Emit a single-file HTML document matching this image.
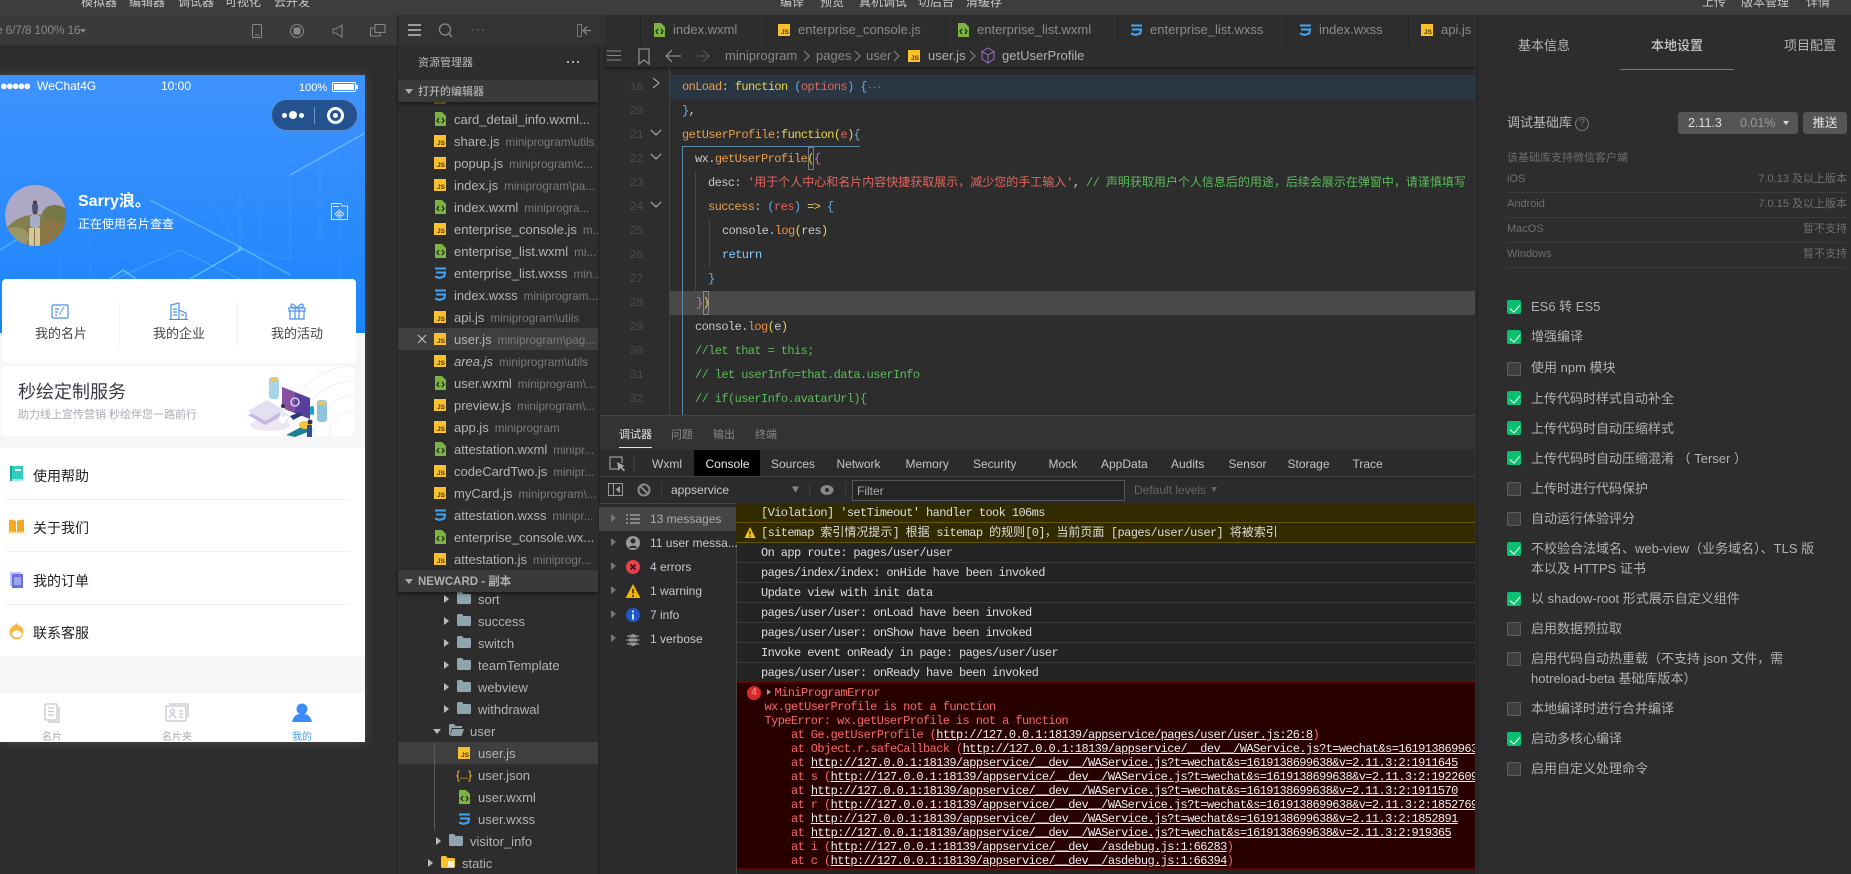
<!DOCTYPE html>
<html lang="zh"><head><meta charset="utf-8"><title>WeChat DevTools</title>
<style>
*{box-sizing:border-box}
html,body{margin:0;padding:0;width:1851px;height:874px;overflow:hidden;background:#2d2d2d}
body{position:relative;font-family:"Liberation Sans","Noto Sans CJK SC",sans-serif;font-size:13px;color:#aaa}
.a,.t{position:absolute;white-space:nowrap}
.a svg,svg.a{display:block}
.top span{position:absolute;top:-7px;line-height:18px;font-size:12px;color:#c8c8c8;white-space:nowrap}
/* sidebar */
.r{position:absolute;left:398px;width:200px;height:22px;line-height:22px;overflow:hidden;white-space:nowrap;color:#b4b4b4;font-size:13px}
.r b{position:absolute;left:56px;font-weight:400;top:1px}
.r b i{font-style:normal;font-size:11.7px;color:#7c7c7c;margin-left:6px}
.r .ic{position:absolute;left:36px;top:5px}
.j{display:block;width:12px;height:12px;background:#fbc02d;color:#4a3700;font:bold 6.5px/6px "Liberation Sans",sans-serif;text-align:right;padding:6px 1px 0 0}
.hi{background:#3f3f3f}
.sec{position:absolute;left:398px;width:200px;height:22px;line-height:22px;padding-top:1px;background:#3a3a3a;color:#b0b0b0;font-size:11px;font-weight:500;padding-left:20px;box-shadow:0 2px 3px rgba(0,0,0,.45);z-index:2}
.sec:before{content:"";position:absolute;left:7px;top:9px;border:4px solid transparent;border-top:5px solid #aaa;border-bottom:0}
.ar{position:absolute;top:7px;border:4px solid transparent;border-left:5px solid #b5bdc2;border-right:0}
.ard{position:absolute;top:9px;border:4px solid transparent;border-top:5px solid #b5bdc2;border-bottom:0}
.fo{position:absolute;top:4px}
/* tabs */
.tb{position:absolute;top:15px;height:30px;line-height:30px;border-left:1px solid #222;color:#8c8c8c;font-size:13px;white-space:nowrap}
.tb b{position:absolute;font-weight:400;top:0}
.tb .ic{position:absolute;top:9px}
/* code */
.n{position:absolute;left:620px;width:23px;text-align:right;font:12px/24px "Liberation Mono",monospace;color:#4c4c4c;letter-spacing:-.6px}
.c{position:absolute;font:12px/25px "Liberation Mono","Noto Sans CJK SC",monospace;letter-spacing:-.6px;white-space:nowrap;color:#c9c9c9}
.c .z{letter-spacing:0}
.og{color:#e8a14f}.ye{color:#e9d54f}.re{color:#e0675f}.bl{color:#5fb0ef}.pk{color:#c86fc8}.gr{color:#5cbb5c}.lg{color:#f08d3c}.kw{color:#86ccff}
/* console */
.dt{position:absolute;top:451px;line-height:26px;font-size:12px;color:#c4c4c4}
.l{position:absolute;left:736px;width:760px;height:20px;padding-left:25px;border-bottom:1px solid #3a3a3a;font:12px/21px "Liberation Mono","Noto Sans CJK SC",monospace;letter-spacing:-.6px;color:#dcdcdc;white-space:nowrap}
.l .z{letter-spacing:0}
.s{position:absolute;left:600px;width:136px;height:24px;line-height:24px;font-size:12px;color:#c8c8c8;white-space:nowrap}
.s b{position:absolute;left:50px;font-weight:400}
.s .ar{left:11px;top:7px;border-left-color:#777}
.s svg{position:absolute;left:25px;top:4px}
.e{position:absolute;font:12px/15px "Liberation Mono",monospace;letter-spacing:-.6px;color:#f46a6a;white-space:nowrap}
.e u{color:#eee}
/* right */
.cb{position:absolute;left:1507px;width:14px;height:14px;border-radius:2px;background:#3f3f3f;border:1px solid #5f5f5f}
.cb.on{background:#07c16f;border:0}
.cb.on:after{content:"";position:absolute;left:5px;top:2px;width:5px;height:9px;border:solid #fff;border-width:0 1.6px 1.6px 0;transform:rotate(40deg)}
.lb{position:absolute;left:1531px;font-size:13px;line-height:20px;color:#b2b2b2;white-space:nowrap}
.inf{position:absolute;left:1507px;width:340px;height:25px;line-height:23px;font-size:11px;color:#707070;border-bottom:1px solid #3c3c3c}
.inf span{position:absolute;right:0}
/* phone */
.mn{position:absolute;left:33px;font-size:14px;line-height:20px;color:#222}
</style></head><body>
<svg width="0" height="0" style="position:absolute"><defs>
<symbol id="x" viewBox="0 0 12 14"><path d="M1 0H8L12 4V14H1Z" fill="#7cb342"/><path d="M5 6L3 8.500L5 11M8 6L10 8.500L8 11" stroke="#1e3010" fill="none" stroke-width="1.300"/></symbol>
<symbol id="w" viewBox="0 0 14 12"><path d="M2 1.500H13M3 5.500H12L11.200 9.500L6.500 11L2 9.500" stroke="#42a5f5" fill="none" stroke-width="2"/></symbol>
<symbol id="f" viewBox="0 0 14 12"><path d="M0 1.500Q0 0 1.500 0H5L6.500 2H12.500Q14 2 14 3.500V10.500Q14 12 12.500 12H1.500Q0 12 0 10.500Z" fill="#90a4ae"/></symbol>
</defs></svg>

<!-- top bar -->
<div class="a top" style="left:0;top:0;width:1851px;height:15px;background:#3d3d3d;overflow:hidden">
<span style="left:81px">模拟器</span><span style="left:129px">编辑器</span><span style="left:178px">调试器</span><span style="left:225px">可视化</span><span style="left:274px">云开发</span>
<span style="left:780px">编译</span><span style="left:820px">预览</span><span style="left:859px">真机调试</span><span style="left:918px">切后台</span><span style="left:966px">清缓存</span>
<span style="left:1702px">上传</span><span style="left:1741px">版本管理</span><span style="left:1806px">详情</span>
</div>

<!-- simulator -->
<div class="a" style="left:0;top:15px;width:398px;height:30px;background:#3a3a3a"></div>
<div class="t" style="left:-4px;top:20px;line-height:20px;font-size:12px;letter-spacing:-.2px;color:#8a8a8a">e 6/7/8 100% 16</div>
<div class="a" style="left:80px;top:29px;border:3.500px solid transparent;border-top:4px solid #888;border-bottom:0"></div>
<svg class="a" style="left:250px;top:22px" width="140" height="18" fill="none" stroke="#888" stroke-width="1"><rect x="2.500" y="2.500" width="9" height="13" rx="1"/><path d="M5 13H9"/><circle cx="47" cy="9" r="6.500"/><rect x="44" y="6" width="6" height="6" fill="#888" rx="1"/><path d="M83 7H86L92 3V15L86 11H83Z"/><rect x="125" y="2.500" width="10" height="8"/><path d="M125 6H120.500V14H130V10.500"/></svg>
<div class="a" style="left:0;top:75px;width:365px;height:667px;box-shadow:0 0 10px rgba(255,255,255,.16)"></div>

<div class="a" style="left:0;top:0;width:365px;height:742px;clip-path:inset(75px 0 0 0);background:#f5f6f8">
<div class="a" style="left:0;top:75px;width:365px;height:258px;background:linear-gradient(#3f93ff,#2f8cfd 45%,#1a85fb)"></div>
<svg class="a" style="left:0;top:75px" width="365" height="258" fill="none" stroke="#8fe0ff">
<path d="M290 100L365 58" stroke-opacity=".5" stroke-width="1.500"/><path d="M290 100V185M290 185L240 175M320 80V170M240 120V175L215 130" stroke-opacity=".14"/>
<path d="M150 125L240 172L290 200" stroke-opacity=".45" stroke-width="1.500"/><path d="M190 204L240 175" stroke-opacity=".55" stroke-width="1.500"/><path d="M115 204L180 175L240 204" stroke-opacity=".3"/><path d="M0 175L40 150" stroke-opacity=".4" stroke-width="1.500"/><path d="M90 120V204M60 130V204M260 130V204M340 130V204" stroke-opacity=".08"/><path d="M110 204L123 195L136 204" stroke-opacity=".6" stroke-width="1.500"/>
<circle cx="240" cy="174" r="2" fill="#9ff" stroke="none" opacity=".35"/>
</svg>
<!-- status bar -->
<div class="t" style="left:0;top:79px;line-height:14px;font-size:13px;letter-spacing:-2px;color:#fff">●●●●●</div>
<div class="t" style="left:37px;top:76px;line-height:20px;font-size:12px;color:#fff">WeChat4G</div>
<div class="t" style="left:161px;top:76px;line-height:20px;font-size:12px;color:#fff">10:00</div>
<div class="t" style="left:299px;top:78px;line-height:20px;font-size:11px;color:#fff">100%</div>
<div class="a" style="left:332px;top:82px;width:24px;height:10px;border:1px solid #fff;border-radius:2px;padding:1px"><div style="width:100%;height:100%;background:#fff"></div></div>
<div class="a" style="left:356px;top:85px;width:1.500px;height:4px;background:#fff"></div>
<!-- capsule -->
<div class="a" style="left:271px;top:99px;width:87px;height:32px;border-radius:16px;background:#23528f;border:1px solid #5d8cc4"></div>
<div class="a" style="left:282px;top:113px;width:5px;height:5px;border-radius:50%;background:#fff"></div>
<div class="a" style="left:289px;top:111px;width:8px;height:8px;border-radius:50%;background:#fff"></div>
<div class="a" style="left:299px;top:113px;width:5px;height:5px;border-radius:50%;background:#fff"></div>
<div class="a" style="left:314px;top:107px;width:1px;height:17px;background:#6f94c2"></div>
<div class="a" style="left:327px;top:107px;width:17px;height:17px;border-radius:50%;border:3px solid #fff"></div>
<div class="a" style="left:333px;top:113px;width:5px;height:5px;border-radius:50%;background:#fff"></div>
<!-- avatar -->
<svg class="a" style="left:5px;top:185px" width="61" height="61"><defs><clipPath id="av"><circle cx="30.500" cy="30.500" r="30.500"/></clipPath></defs><g clip-path="url(#av)"><rect width="61" height="61" fill="#aba9c6"/><path d="M0 45Q12 30 28 30T61 24V61H0Z" fill="#857f4e"/><ellipse cx="50" cy="30" rx="13" ry="10" fill="#76784a"/><ellipse cx="42" cy="48" rx="22" ry="14" fill="#8a7546"/><ellipse cx="10" cy="52" rx="14" ry="10" fill="#9a9668"/><rect x="25" y="30" width="10" height="13" rx="3" fill="#a4aec8"/><rect x="24" y="43" width="5" height="18" fill="#d4c69c"/><rect x="30" y="43" width="5" height="18" fill="#d4c69c"/><circle cx="30" cy="27" r="2.500" fill="#5a4636"/><rect x="27" y="19" width="6" height="7" rx="1.500" fill="#4a5578"/><circle cx="30" cy="17.500" r="2" fill="#4a3a30"/></g></svg>
<div class="t" style="left:78px;top:191px;line-height:22px;font-size:16px;font-weight:700;color:#fff">Sarry浪。</div>
<div class="t" style="left:78px;top:214px;line-height:20px;font-size:12px;color:#fff">正在使用名片查查</div>
<svg class="a" style="left:330px;top:202px" width="19" height="19" fill="none" stroke="#cfe4ff"><path d="M1.500 1.500H11L12 4H17.500V17.500H1.500Z"/><path d="M3 4.500H9"/><path d="M9.500 8L14 12L9.500 16L5 12Z"/><circle cx="9.500" cy="12" r="1.500"/></svg>
<!-- card 1 -->
<div class="a" style="left:2px;top:279px;width:354px;height:84px;background:#fff;border-radius:4px"></div>
<div class="a" style="left:119px;top:302px;width:1px;height:45px;background:#f0f0f0"></div>
<div class="a" style="left:237px;top:302px;width:1px;height:45px;background:#f0f0f0"></div>
<svg class="a" style="left:50px;top:303px" width="20" height="17" fill="none" stroke="#4a8ff0" stroke-width="1.200"><rect x="2" y="2" width="16" height="13" rx="1"/><path d="M5 6H9M5 9H8M5 12H7"/><path d="M14 4L9 12" stroke="#7ab0f5"/></svg>
<svg class="a" style="left:169px;top:302px" width="20" height="18" fill="none" stroke="#4a8ff0" stroke-width="1.200"><path d="M2 17V3L10 1V17M10 8L17 11V17M0 17.500H19"/><path d="M4 7H8M4 10H8M4 13H8M12 13H15"/></svg>
<svg class="a" style="left:287px;top:302px" width="20" height="18" fill="none" stroke="#4a8ff0" stroke-width="1.200"><rect x="2" y="6" width="16" height="3"/><path d="M3 9V17H17V9M8 6V17M12 6V17M10 6Q5 0 4 3T10 6Q15 0 16 3T10 6"/></svg>
<div class="t" style="left:35px;top:324px;line-height:20px;font-size:13px;color:#444">我的名片</div>
<div class="t" style="left:153px;top:324px;line-height:20px;font-size:13px;color:#444">我的企业</div>
<div class="t" style="left:271px;top:324px;line-height:20px;font-size:13px;color:#444">我的活动</div>
<!-- card 2 -->
<div class="a" style="left:1px;top:366px;width:353px;height:70px;background:#fff;border-radius:4px;overflow:hidden">
<svg class="a" style="left:0;top:0" width="353" height="70" fill="none" stroke="#eef0f4"><circle cx="353" cy="70" r="25"/><circle cx="353" cy="70" r="40"/><circle cx="353" cy="70" r="55"/><circle cx="353" cy="70" r="70"/></svg>
</div>
<div class="t" style="left:18px;top:379px;line-height:26px;font-size:18px;color:#3a3a44">秒绘定制服务</div>
<div class="t" style="left:18px;top:405px;line-height:20px;font-size:11px;color:#aaabb3">助力线上宣传营销 秒绘伴您一路前行</div>
<svg class="a" style="left:245px;top:375px" width="85" height="62">
<ellipse cx="25" cy="50" rx="20" ry="6" fill="#eee8f5"/>
<path d="M3 40L22 31L39 40L20 50Z" fill="#c6b8e2"/><path d="M3 36L22 25L39 35L20 46Z" fill="#e5dff2"/>
<rect x="24" y="2" width="10" height="22" rx="3" fill="#a8d4e8"/><ellipse cx="29" cy="5" rx="4" ry="2" fill="#f3c84a"/>
<path d="M37 12L65 23V44L37 33Z" fill="#5a3e9c"/><path d="M37 12L50 17V37L37 33Z" fill="#8a4ea0"/><circle cx="50" cy="27" r="4" fill="none" stroke="#c6d4f2" stroke-width="1.500"/>
<path d="M37 36L45 42L38 50L32 46Z" fill="#fff" stroke="#dde"/><circle cx="38" cy="31" r="2" fill="#334"/><rect x="36" y="33" width="4" height="9" fill="#e6ecf6"/>
<path d="M45 41L55 37L58 40L48 45Z" fill="#2a3b78"/>
<path d="M41 60L60 50L68 55L50 62Z" fill="#1e7f9a"/><ellipse cx="60" cy="50" rx="6" ry="4" fill="#f5c33c"/>
<rect x="72" y="25" width="10" height="22" rx="3" fill="#8fc4dc"/><ellipse cx="77" cy="28" rx="4" ry="2" fill="#f3c84a"/>
<rect x="62" y="50" width="5" height="12" fill="#2f4f8f"/><circle cx="65" cy="47" r="2.500" fill="#334"/><rect x="65" y="31" width="4" height="9" rx="2" fill="#1fa0d8"/>
</svg>
<!-- menu -->
<div class="a" style="left:0;top:448px;width:365px;height:208px;background:#fff"></div>
<div class="a" style="left:5px;top:499px;width:345px;height:1px;background:#f0f0f0"></div>
<div class="a" style="left:5px;top:551px;width:345px;height:1px;background:#f0f0f0"></div>
<div class="a" style="left:5px;top:604px;width:345px;height:1px;background:#f0f0f0"></div>
<svg class="a" style="left:10px;top:466px" width="13" height="16"><rect width="13" height="15" fill="#2dcfc0"/><rect x="0" y="13" width="13" height="2" fill="#a8ece6"/><rect x="0" width="2" height="15" fill="#1aa79b"/><rect x="5" y="3" width="6" height="2" fill="#fff"/></svg>
<svg class="a" style="left:8px;top:519px" width="17" height="15"><path d="M8 2Q4 0 1 1V13Q5 12 8 14Z" fill="#f2a823"/><path d="M9 2Q13 0 16 1V13Q12 12 9 14Z" fill="#f2a823"/><path d="M0 13H17V14.500H0Z" fill="#f8d79c"/></svg>
<svg class="a" style="left:10px;top:572px" width="13" height="16"><rect width="11" height="14" fill="#b4c8fa"/><rect x="2" y="2" width="11" height="14" fill="#6a70d8"/><rect x="4" y="5" width="7" height="8" fill="#9ea4e8"/></svg>
<svg class="a" style="left:9px;top:623px" width="15" height="17"><circle cx="7.500" cy="9" r="7" fill="#f7b744"/><path d="M7.500 0L10 3H5Z" fill="#f7b744"/><ellipse cx="8" cy="11" rx="5" ry="3.500" fill="#fff"/><path d="M2 13Q7.500 19 13 13" stroke="#f7b744" fill="none"/></svg>
<div class="mn" style="top:466px">使用帮助</div><div class="mn" style="top:518px">关于我们</div><div class="mn" style="top:571px">我的订单</div><div class="mn" style="top:623px">联系客服</div>
<!-- tab bar -->
<div class="a" style="left:0;top:694px;width:365px;height:48px;background:#fff"></div>
<svg class="a" style="left:44px;top:703px" width="17" height="20" fill="none" stroke="#c4c6ce" stroke-width="1.300"><rect x="1" y="1" width="12" height="16" rx="1"/><path d="M4 5H10M4 8.500H10M4 12H10" /><path d="M15 4V19H4" stroke-width="2" stroke="#d8dae0"/></svg>
<svg class="a" style="left:165px;top:703px" width="24" height="19" fill="none" stroke="#c4c6ce" stroke-width="1.300"><rect x="1" y="3" width="20" height="15" rx="1"/><path d="M4 1H23V14"/><circle cx="7.500" cy="8.500" r="2"/><path d="M4 15Q7.500 9 11 15M14 8H18M14 11H18M14 14H18"/></svg>
<svg class="a" style="left:292px;top:703px" width="20" height="19"><circle cx="10" cy="6" r="5.500" fill="#3c8cf8"/><path d="M0 19Q2 11 8 11H12Q18 11 20 19Z" fill="#3c8cf8"/></svg>
<div class="t" style="left:42px;top:730px;line-height:16px;font-size:10px;color:#a8a8a8">名片</div>
<div class="t" style="left:162px;top:730px;line-height:16px;font-size:10px;color:#a8a8a8">名片夹</div>
<div class="t" style="left:292px;top:730px;line-height:16px;font-size:10px;color:#4a9bf5">我的</div>
</div>

<div class="a" style="left:397px;top:15px;width:1px;height:859px;background:#242424"></div>

<!-- sidebar -->
<div class="a" style="left:398px;top:15px;width:207px;height:30px;background:#333"></div>
<svg class="a" style="left:405px;top:20px" width="196" height="22" fill="none"><path d="M3 5H16M3 10H16M3 15H16" stroke="#ddd" stroke-width="1.300"/><circle cx="40" cy="9.500" r="5.500" stroke="#888" stroke-width="1.300"/><path d="M44 13.500L47 17" stroke="#888" stroke-width="1.500"/><path d="M67 10H69M72 10H74M77 10H79" stroke="#666" stroke-width="1.300"/><rect x="172.500" y="4.500" width="4" height="12" stroke="#8a6a8a"/><path d="M186 10.500H178M182 6.500L178 10.500L182 14.500" stroke="#888" stroke-width="1.300"/></svg>
<div class="t" style="left:418px;top:53px;line-height:20px;font-size:11px;color:#bcbcbc">资源管理器</div>
<svg class="a" style="left:565px;top:60px" width="16" height="4"><circle cx="3" cy="2" r="1" fill="#ddd"/><circle cx="8" cy="2" r="1" fill="#ddd"/><circle cx="13" cy="2" r="1" fill="#ddd"/></svg>
<div class="sec" style="top:80px">打开的编辑器</div>
<div class="a" style="left:434px;top:102px;width:12px;height:2px;background:#8a6e22"></div>

<div class="r" style="top:108px"><svg class="ic" width="12" height="14" style="top:4px"><use href="#x"/></svg><b>card_detail_info.wxml...</b></div>
<div class="r" style="top:130px"><span class="ic j">JS</span><b>share.js<i>miniprogram\utils</i></b></div>
<div class="r" style="top:152px"><span class="ic j">JS</span><b>popup.js<i>miniprogram\c...</i></b></div>
<div class="r" style="top:174px"><span class="ic j">JS</span><b>index.js<i>miniprogram\pa...</i></b></div>
<div class="r" style="top:196px"><svg class="ic" width="12" height="14" style="top:4px"><use href="#x"/></svg><b>index.wxml<i>miniprogra...</i></b></div>
<div class="r" style="top:218px"><span class="ic j">JS</span><b>enterprise_console.js<i>m...</i></b></div>
<div class="r" style="top:240px"><svg class="ic" width="12" height="14" style="top:4px"><use href="#x"/></svg><b>enterprise_list.wxml<i>mi...</i></b></div>
<div class="r" style="top:262px"><svg class="ic" width="14" height="12" style="left:35px"><use href="#w"/></svg><b>enterprise_list.wxss<i>min...</i></b></div>
<div class="r" style="top:284px"><svg class="ic" width="14" height="12" style="left:35px"><use href="#w"/></svg><b>index.wxss<i>miniprogram...</i></b></div>
<div class="r" style="top:306px"><span class="ic j">JS</span><b>api.js<i>miniprogram\utils</i></b></div>
<div class="r hi" style="top:328px"><svg class="a" style="left:19px;top:6px" width="10" height="10" stroke="#c8c8c8" fill="none"><path d="M1 1L9 9M9 1L1 9"/></svg><span class="ic j">JS</span><b>user.js<i>miniprogram\pag...</i></b></div>
<div class="r" style="top:350px"><span class="ic j">JS</span><b><em>area.js</em><i>miniprogram\utils</i></b></div>
<div class="r" style="top:372px"><svg class="ic" width="12" height="14" style="top:4px"><use href="#x"/></svg><b>user.wxml<i>miniprogram\...</i></b></div>
<div class="r" style="top:394px"><span class="ic j">JS</span><b>preview.js<i>miniprogram\...</i></b></div>
<div class="r" style="top:416px"><span class="ic j">JS</span><b>app.js<i>miniprogram</i></b></div>
<div class="r" style="top:438px"><svg class="ic" width="12" height="14" style="top:4px"><use href="#x"/></svg><b>attestation.wxml<i>minipr...</i></b></div>
<div class="r" style="top:460px"><span class="ic j">JS</span><b>codeCardTwo.js<i>minipr...</i></b></div>
<div class="r" style="top:482px"><span class="ic j">JS</span><b>myCard.js<i>miniprogram\...</i></b></div>
<div class="r" style="top:504px"><svg class="ic" width="14" height="12" style="left:35px"><use href="#w"/></svg><b>attestation.wxss<i>minipr...</i></b></div>
<div class="r" style="top:526px"><svg class="ic" width="12" height="14" style="top:4px"><use href="#x"/></svg><b>enterprise_console.wx...</b></div>
<div class="r" style="top:548px"><span class="ic j">JS</span><b>attestation.js<i>miniprogr...</i></b></div>

<div class="sec" style="top:570px;font-size:11.500px;font-weight:700">NEWCARD - 副本</div>
<div class="r" style="top:588px"><span class="ar" style="left:46px"></span><svg class="fo" width="14" height="12" style="left:59px"><use href="#f"/></svg><b style="left:80px">sort</b></div>
<div class="r" style="top:610px"><span class="ar" style="left:46px"></span><svg class="fo" width="14" height="12" style="left:59px"><use href="#f"/></svg><b style="left:80px">success</b></div>
<div class="r" style="top:632px"><span class="ar" style="left:46px"></span><svg class="fo" width="14" height="12" style="left:59px"><use href="#f"/></svg><b style="left:80px">switch</b></div>
<div class="r" style="top:654px"><span class="ar" style="left:46px"></span><svg class="fo" width="14" height="12" style="left:59px"><use href="#f"/></svg><b style="left:80px">teamTemplate</b></div>
<div class="r" style="top:676px"><span class="ar" style="left:46px"></span><svg class="fo" width="14" height="12" style="left:59px"><use href="#f"/></svg><b style="left:80px">webview</b></div>
<div class="r" style="top:698px"><span class="ar" style="left:46px"></span><svg class="fo" width="14" height="12" style="left:59px"><use href="#f"/></svg><b style="left:80px">withdrawal</b></div>
<div class="r" style="top:720px"><span class="ard" style="left:35px"></span><svg class="fo" width="15" height="12" style="left:51px;overflow:visible" fill="#90a4ae"><path d="M0 1.500Q0 0 1.500 0H5L6.500 2H13V4H3L1 11H0Z"/><path d="M3.500 5H15L12.500 12H1Z"/></svg><b style="left:72px">user</b></div>
<div class="r hi" style="top:742px"><span class="ic j" style="left:60px">JS</span><b style="left:80px">user.js</b></div>
<div class="r" style="top:764px"><span class="a" style="left:58px;top:0;font:12px/22px 'Liberation Sans',sans-serif;color:#f4b942;letter-spacing:-.5px">{...}</span><b style="left:80px">user.json</b></div>
<div class="r" style="top:786px"><svg class="ic" width="12" height="14" style="left:60px;top:4px"><use href="#x"/></svg><b style="left:80px">user.wxml</b></div>
<div class="r" style="top:808px"><svg class="ic" width="14" height="12" style="left:59px"><use href="#w"/></svg><b style="left:80px">user.wxss</b></div>
<div class="a" style="left:434px;top:742px;width:1px;height:88px;background:#5a5a5a"></div>
<div class="r" style="top:830px"><span class="ar" style="left:38px"></span><svg class="fo" width="14" height="12" style="left:51px"><use href="#f"/></svg><b style="left:72px">visitor_info</b></div>
<div class="r" style="top:852px"><span class="ar" style="left:30px"></span><svg class="fo" width="14" height="12" style="left:43px" fill="#fbc02d"><path d="M0 1.500Q0 0 1.500 0H5L6.500 2H12.500Q14 2 14 3.500V10.500Q14 12 12.500 12H1.500Q0 12 0 10.500Z"/><rect x="7" y="5" width="6" height="6" fill="#f4f0e0"/></svg><b style="left:64px">static</b></div>
<div class="a" style="left:598px;top:45px;width:2px;height:829px;background:#262626"></div>
<div class="a" style="left:599px;top:507px;width:6px;height:24px;background:#4a4a4a"></div>

<!-- editor tabs -->
<div class="tb" style="left:640px;width:126px"><svg class="ic" width="12" height="14" style="left:12px;top:8px"><use href="#x"/></svg><b style="left:32px">index.wxml</b></div>
<div class="tb" style="left:766px;width:179px"><span class="ic j" style="left:11px">JS</span><b style="left:31px">enterprise_console.js</b></div>
<div class="tb" style="left:945px;width:172px"><svg class="ic" width="12" height="14" style="left:11px;top:8px"><use href="#x"/></svg><b style="left:31px">enterprise_list.wxml</b></div>
<div class="tb" style="left:1117px;width:169px"><svg class="ic" width="14" height="12" style="left:11px"><use href="#w"/></svg><b style="left:32px">enterprise_list.wxss</b></div>
<div class="tb" style="left:1286px;width:122px"><svg class="ic" width="14" height="12" style="left:11px"><use href="#w"/></svg><b style="left:32px">index.wxss</b></div>
<div class="tb" style="left:1408px;width:70px"><span class="ic j" style="left:12px">JS</span><b style="left:32px">api.js</b></div>
<!-- breadcrumb -->
<div class="a" style="left:605px;top:45px;width:870px;height:22px;background:#2d2d2d;box-shadow:0 2px 3px rgba(0,0,0,.4)"></div>
<svg class="a" style="left:605px;top:46px" width="110" height="20" fill="none" stroke="#8a8a8a"><path d="M2 5H16M2 9.500H16M2 14H16" /><path d="M34 3H44V18L39 14L34 18Z" stroke-width="1.300"/><path d="M76 10H61M67 4L61 10L67 16" stroke-width="1.300"/><path d="M104 10H90M98 4L104 10L98 16" stroke="#4f4f4f" stroke-width="1.300"/></svg>
<div class="t" style="left:725px;top:47px;line-height:18px;color:#888">miniprogram</div>
<div class="t" style="left:816px;top:47px;line-height:18px;color:#888">pages</div>
<div class="t" style="left:866px;top:47px;line-height:18px;color:#888">user</div>
<svg class="a" style="left:803px;top:49px" width="180" height="14" fill="none" stroke="#888"><path d="M1 2L6 7L1 12M52 2L57 7L52 12M91 2L96 7L91 12M167 2L172 7L167 12"/></svg>
<span class="a j" style="left:908px;top:50px">JS</span>
<div class="t" style="left:928px;top:47px;line-height:18px;color:#b0b0b0">user.js</div>
<svg class="a" style="left:981px;top:47px" width="14" height="17" fill="none" stroke="#9a6fc4"><path d="M7 1L13 4.500V12L7 16L1 12V4.500ZM1 4.500L7 8L13 4.500M7 8V16"/></svg>
<div class="t" style="left:1002px;top:47px;line-height:18px;color:#b0b0b0">getUserProfile</div>

<!-- code -->
<div class="a" style="left:670px;top:75px;width:805px;height:24px;background:#2a3642"></div>
<div class="a" style="left:670px;top:291px;width:805px;height:24px;background:#4a4a4a"></div>
<div class="a" style="left:669px;top:67px;width:1px;height:348px;background:#424242"></div>
<div class="a" style="left:682px;top:146px;width:178px;height:1px;background:#5d8aa8"></div>
<div class="a" style="left:682px;top:146px;width:1px;height:269px;background:#5d8aa8"></div>
<div class="a" style="left:695px;top:171px;width:1px;height:120px;background:#454545"></div>
<div class="a" style="left:709px;top:219px;width:1px;height:48px;background:#454545"></div>
<div class="a" style="left:808px;top:147px;width:6px;height:23px;border:1px solid #7d7d7d"></div>
<div class="a" style="left:703px;top:291px;width:6px;height:24px;border:1px solid #8a8a8a"></div>

<div class="n" style="top:75px">16</div><div class="n" style="top:99px">20</div><div class="n" style="top:123px">21</div><div class="n" style="top:147px">22</div><div class="n" style="top:171px">23</div><div class="n" style="top:195px">24</div><div class="n" style="top:219px">25</div><div class="n" style="top:243px">26</div><div class="n" style="top:267px">27</div><div class="n" style="top:291px">28</div><div class="n" style="top:315px">29</div><div class="n" style="top:339px">30</div><div class="n" style="top:363px">31</div><div class="n" style="top:387px">32</div>
<svg class="a" style="left:650px;top:76px" width="12" height="14" fill="none" stroke="#b8b8b8"><path d="M3 2L9 7L3 12"/></svg>
<svg class="a" style="left:650px;top:128px" width="12" height="10" fill="none" stroke="#b8b8b8"><path d="M1 2L6 7L11 2"/></svg>
<svg class="a" style="left:650px;top:152px" width="12" height="10" fill="none" stroke="#b8b8b8"><path d="M1 2L6 7L11 2"/></svg>
<svg class="a" style="left:650px;top:200px" width="12" height="10" fill="none" stroke="#b8b8b8"><path d="M1 2L6 7L11 2"/></svg>

<div class="c" style="left:682px;top:75px"><span class="og">onLoad</span>: <span class="ye">function</span> <span class="bl">(</span><span class="re">options</span><span class="bl">)</span> <span class="bl">{</span><span style="color:#888;font-size:9px">···</span></div>
<div class="c" style="left:682px;top:99px"><span class="bl">}</span>,</div>
<div class="c" style="left:682px;top:123px"><span class="og">getUserProfile</span>:<span class="ye">function</span><span class="ye">(</span><span class="re">e</span><span class="ye">)</span><span class="bl">{</span></div>
<div class="c" style="left:695px;top:147px">wx.<span class="og">getUserProfile</span><span class="ye">(</span><span class="pk">{</span></div>
<div class="c" style="left:708px;top:171px">desc: <span class="re">'<span class="z">用于个人中心和名片内容快捷获取展示，减少您的手工输入</span>'</span>, <span class="gr">// <span class="z">声明获取用户个人信息后的用途，后续会展示在弹窗中，请谨慎填写</span></span></div>
<div class="c" style="left:708px;top:195px"><span class="og">success</span>: <span class="bl">(</span><span class="re">res</span><span class="bl">)</span> <span class="ye">=&gt;</span> <span class="bl">{</span></div>
<div class="c" style="left:722px;top:219px">console.<span class="lg">log</span><span class="ye">(</span>res<span class="ye">)</span></div>
<div class="c" style="left:722px;top:243px"><span class="kw">return</span></div>
<div class="c" style="left:708px;top:267px"><span class="bl">}</span></div>
<div class="c" style="left:696px;top:291px"><span class="pk">}</span><span class="ye">)</span></div>
<div class="c" style="left:695px;top:315px">console.<span class="lg">log</span><span class="ye">(</span>e<span class="ye">)</span></div>
<div class="c gr" style="left:695px;top:339px">//let that = this;</div>
<div class="c gr" style="left:695px;top:363px">// let userInfo=that.data.userInfo</div>
<div class="c gr" style="left:695px;top:387px">// if(userInfo.avatarUrl){</div>

<!-- debug panel -->
<div class="a" style="left:600px;top:415px;width:875px;height:459px;background:#2b2b2d;border-top:1px solid #444"></div>
<div class="a" style="left:600px;top:416px;width:875px;height:34px;background:#333"></div>
<div class="t" style="left:619px;top:425px;line-height:20px;font-size:11px;color:#e4e4e4">调试器</div>
<div class="t" style="left:671px;top:425px;line-height:20px;font-size:11px;color:#888">问题</div>
<div class="t" style="left:713px;top:425px;line-height:20px;font-size:11px;color:#888">输出</div>
<div class="t" style="left:755px;top:425px;line-height:20px;font-size:11px;color:#888">终端</div>
<div class="a" style="left:619px;top:447px;width:33px;height:1px;background:#e4e4e4"></div>
<div class="a" style="left:600px;top:476px;width:875px;height:1px;background:#3f3f3f"></div>
<svg class="a" style="left:608px;top:455px" width="36" height="18" fill="none"><path d="M10 14H2V2H14V8" stroke="#999" stroke-width="1.200"/><path d="M9 7L10.500 16L12.500 13L16 16.500L17 15L13.800 12L16.500 11Z" fill="#aaa"/><path d="M26 2V16" stroke="#444"/></svg>
<div class="a" style="left:694px;top:450px;width:66px;height:26px;background:#000"></div>
<div class="dt" style="left:652px">Wxml</div><div class="dt" style="left:705.500px;color:#e8e8e8">Console</div><div class="dt" style="left:771px">Sources</div><div class="dt" style="left:836.500px">Network</div><div class="dt" style="left:905.500px">Memory</div><div class="dt" style="left:973px">Security</div><div class="dt" style="left:1048.500px">Mock</div><div class="dt" style="left:1101px">AppData</div><div class="dt" style="left:1171px">Audits</div><div class="dt" style="left:1228.500px">Sensor</div><div class="dt" style="left:1287.500px">Storage</div><div class="dt" style="left:1352.500px">Trace</div>
<svg class="a" style="left:606px;top:480px" width="260" height="20" fill="none"><rect x="2.500" y="3.500" width="14" height="12" stroke="#999"/><path d="M7.500 3.500V15.500" stroke="#999"/><path d="M14 6V13L9.500 9.500Z" fill="#999"/><circle cx="38" cy="10" r="5.500" stroke="#888" stroke-width="2"/><path d="M34 6L42 14" stroke="#888" stroke-width="2"/><path d="M55.500 3V17M203.500 3V17M239.500 3V17" stroke="#3f3f3f"/><path d="M186 6.500H193L189.500 12.500Z" fill="#888"/><ellipse cx="221" cy="10" rx="6.500" ry="5" fill="#888"/><circle cx="221" cy="10" r="2" fill="#2b2b2d"/></svg>
<div class="t" style="left:671px;top:480px;line-height:20px;font-size:12px;color:#c8c8c8">appservice</div>
<div class="a" style="left:852px;top:480px;width:273px;height:21px;border:1px solid #555;background:#252525;padding-left:4px;line-height:21px;font-size:12px;color:#aaa">Filter</div>
<div class="t" style="left:1134px;top:480px;line-height:20px;font-size:12px;color:#666">Default levels</div>
<div class="a" style="left:1211px;top:487px;border:3.500px solid transparent;border-top:5px solid #666;border-bottom:0"></div>
<div class="a" style="left:600px;top:503px;width:875px;height:1px;background:#444"></div>

<!-- console sidebar -->
<div class="a" style="left:736px;top:503px;width:1px;height:371px;background:#444"></div>
<div class="s" style="top:507px;background:#454545;color:#aaa"><span class="ar"></span><svg width="16" height="16"><path d="M1 4H3M5 4H15M1 8H3M5 8H15M1 12H3M5 12H15" stroke="#888" stroke-width="2"/></svg><b>13 messages</b></div>
<div class="s" style="top:531px"><span class="ar"></span><svg width="16" height="16"><circle cx="8" cy="8" r="7" fill="#999"/><circle cx="8" cy="6" r="2.500" fill="#2b2b2d"/><path d="M3.500 13Q8 8 12.500 13" fill="#2b2b2d"/></svg><b>11 user messa...</b></div>
<div class="s" style="top:555px"><span class="ar"></span><svg width="16" height="16"><circle cx="8" cy="8" r="7" fill="#e8404a"/><path d="M5.500 5.500L10.500 10.500M10.500 5.500L5.500 10.500" stroke="#3a1015" stroke-width="1.600"/></svg><b>4 errors</b></div>
<div class="s" style="top:579px"><span class="ar"></span><svg width="16" height="16"><path d="M8 1L15.500 15H.5Z" fill="#f2b600"/><path d="M8 6V10.500M8 12V14" stroke="#2b2b2d" stroke-width="1.600"/></svg><b>1 warning</b></div>
<div class="s" style="top:603px"><span class="ar"></span><svg width="16" height="16"><circle cx="8" cy="8" r="7" fill="#2356c8"/><path d="M8 3.500V5.500M8 7V12.500" stroke="#cfe" stroke-width="1.800"/></svg><b>7 info</b></div>
<div class="s" style="top:627px"><span class="ar"></span><svg width="16" height="16"><ellipse cx="8" cy="9" rx="4" ry="6" fill="#999"/><path d="M2 5H14M1.500 9H14.500M2 13H14" stroke="#999" stroke-width="1.200"/><path d="M4 7H12M4 11H12" stroke="#2b2b2d"/></svg><b>1 verbose</b></div>

<!-- console -->
<div class="a" style="left:737px;top:504px;width:760px;height:370px;background:#242424"></div>
<div class="l" style="top:503px;background:#332b00;border-bottom:1px solid #665500;line-height:20px">[Violation] 'setTimeout' handler took 106ms</div>
<div class="l" style="top:523px;background:#332b00;border-bottom:1px solid #665500">[sitemap <span class="z">索引情况提示</span>] <span class="z">根据</span> sitemap <span class="z">的规则</span>[0]，<span class="z">当前页面</span> [pages/user/user] <span class="z">将被索引</span></div>
<svg class="a" style="left:744px;top:526px" width="12" height="13"><path d="M6 1L11.500 12H.5Z" fill="#f2c11e"/><path d="M6 5V8.500M6 9.500V11" stroke="#332b00" stroke-width="1.200"/></svg>
<div class="l" style="top:543px">On app route: pages/user/user</div>
<div class="l" style="top:563px">pages/index/index: onHide have been invoked</div>
<div class="l" style="top:583px">Update view with init data</div>
<div class="l" style="top:603px">pages/user/user: onLoad have been invoked</div>
<div class="l" style="top:623px">pages/user/user: onShow have been invoked</div>
<div class="l" style="top:643px">Invoke event onReady in page: pages/user/user</div>
<div class="l" style="top:663px;border-bottom:0">pages/user/user: onReady have been invoked</div>
<div class="a" style="left:737px;top:682px;width:760px;height:187px;background:#280000;border-top:1px solid #5c0000;border-bottom:1px solid #5c0000"></div>
<div class="a" style="left:747px;top:686px;width:14px;height:14px;border-radius:50%;background:#d62a2a;color:#f4a0a0;font-size:10px;line-height:14px;text-align:center">4</div>
<div class="a" style="left:767px;top:689px;border:3.500px solid transparent;border-left:4px solid #999;border-right:0"></div>
<div class="e" style="left:774.500px;top:686px">MiniProgramError</div>
<div class="e" style="left:764.500px;top:700px">wx.getUserProfile is not a function</div>
<div class="e" style="left:764.500px;top:714px">TypeError: wx.getUserProfile is not a function</div>
<div class="e" style="left:791px;top:728px">at Ge.getUserProfile (<u>http://127.0.0.1:18139/appservice/pages/user/user.js:26:8</u>)</div>
<div class="e" style="left:791px;top:742px">at Object.r.safeCallback (<u>http://127.0.0.1:18139/appservice/__dev__/WAService.js?t=wechat&amp;s=1619138699638&amp;v=2.11.3:2:1911645</u>)</div>
<div class="e" style="left:791px;top:756px">at <u>http://127.0.0.1:18139/appservice/__dev__/WAService.js?t=wechat&amp;s=1619138699638&amp;v=2.11.3:2:1911645</u></div>
<div class="e" style="left:791px;top:770px">at s (<u>http://127.0.0.1:18139/appservice/__dev__/WAService.js?t=wechat&amp;s=1619138699638&amp;v=2.11.3:2:1922609</u>)</div>
<div class="e" style="left:791px;top:784px">at <u>http://127.0.0.1:18139/appservice/__dev__/WAService.js?t=wechat&amp;s=1619138699638&amp;v=2.11.3:2:1911570</u></div>
<div class="e" style="left:791px;top:798px">at r (<u>http://127.0.0.1:18139/appservice/__dev__/WAService.js?t=wechat&amp;s=1619138699638&amp;v=2.11.3:2:1852769</u>)</div>
<div class="e" style="left:791px;top:812px">at <u>http://127.0.0.1:18139/appservice/__dev__/WAService.js?t=wechat&amp;s=1619138699638&amp;v=2.11.3:2:1852891</u></div>
<div class="e" style="left:791px;top:826px">at <u>http://127.0.0.1:18139/appservice/__dev__/WAService.js?t=wechat&amp;s=1619138699638&amp;v=2.11.3:2:919365</u></div>
<div class="e" style="left:791px;top:840px">at i (<u>http://127.0.0.1:18139/appservice/__dev__/asdebug.js:1:66283</u>)</div>
<div class="e" style="left:791px;top:854px">at c (<u>http://127.0.0.1:18139/appservice/__dev__/asdebug.js:1:66394</u>)</div>

<!-- right panel -->
<div class="a" style="left:1477px;top:15px;width:374px;height:859px;background:#2d2d2d;border-left:1px solid #222"></div>
<div class="a" style="left:1475px;top:15px;width:2px;height:859px;background:#2d2d2d"></div>
<div class="t" style="left:1518px;top:36px;line-height:20px;font-size:13px;color:#b4b4b4">基本信息</div>
<div class="t" style="left:1651px;top:36px;line-height:20px;font-size:13px;color:#c8c8c8;font-weight:500">本地设置</div>
<div class="t" style="left:1784px;top:36px;line-height:20px;font-size:13px;color:#b4b4b4">项目配置</div>
<div class="a" style="left:1620px;top:69px;width:114px;height:1px;background:#777"></div>
<div class="t" style="left:1507px;top:113px;line-height:20px;font-size:13px;color:#b8b8b8">调试基础库</div>
<div class="a" style="left:1575px;top:117px;width:14px;height:14px;border-radius:50%;border:1px solid #777;color:#777;font-size:10px;line-height:12px;text-align:center">?</div>
<div class="a" style="left:1678px;top:112px;width:120px;height:22px;background:#555;border-radius:3px"></div>
<div class="t" style="left:1688px;top:112px;line-height:22px;font-size:12.500px;color:#ddd">2.11.3</div>
<div class="t" style="left:1740px;top:112px;line-height:22px;font-size:12.500px;color:#999">0.01%</div>
<div class="a" style="left:1783px;top:121px;border:3px solid transparent;border-top:4px solid #ddd;border-bottom:0"></div>
<div class="a" style="left:1803px;top:112px;width:44px;height:22px;background:#555;border-radius:3px;line-height:22px;text-align:center;color:#e4e4e4;font-size:12.500px">推送</div>
<div class="t" style="left:1507px;top:148px;line-height:20px;font-size:11px;color:#6e6e6e">该基础库支持微信客户端</div>
<div class="inf" style="top:168px">iOS<span>7.0.13 及以上版本</span></div>
<div class="inf" style="top:193px">Android<span>7.0.15 及以上版本</span></div>
<div class="inf" style="top:218px">MacOS<span>暂不支持</span></div>
<div class="inf" style="top:243px">Windows<span>暂不支持</span></div>

<div class="cb on" style="top:300px"></div><div class="lb" style="top:297px">ES6 转 ES5</div>
<div class="cb on" style="top:330px"></div><div class="lb" style="top:327px">增强编译</div>
<div class="cb" style="top:362px"></div><div class="lb" style="top:358px">使用 npm 模块</div>
<div class="cb on" style="top:391px"></div><div class="lb" style="top:389px">上传代码时样式自动补全</div>
<div class="cb on" style="top:421px"></div><div class="lb" style="top:419px">上传代码时自动压缩样式</div>
<div class="cb on" style="top:451px"></div><div class="lb" style="top:449px">上传代码时自动压缩混淆 （ Terser ）</div>
<div class="cb" style="top:482px"></div><div class="lb" style="top:479px">上传时进行代码保护</div>
<div class="cb" style="top:512px"></div><div class="lb" style="top:509px">自动运行体验评分</div>
<div class="cb on" style="top:542px"></div><div class="lb" style="top:539px">不校验合法域名、web-view（业务域名）、TLS 版</div><div class="lb" style="top:559px">本以及 HTTPS 证书</div>
<div class="cb on" style="top:592px"></div><div class="lb" style="top:589px">以 shadow-root 形式展示自定义组件</div>
<div class="cb" style="top:622px"></div><div class="lb" style="top:619px">启用数据预拉取</div>
<div class="cb" style="top:652px"></div><div class="lb" style="top:649px">启用代码自动热重载（不支持 json 文件，需</div><div class="lb" style="top:669px">hotreload-beta 基础库版本）</div>
<div class="cb" style="top:702px"></div><div class="lb" style="top:699px">本地编译时进行合并编译</div>
<div class="cb on" style="top:732px"></div><div class="lb" style="top:729px">启动多核心编译</div>
<div class="cb" style="top:762px"></div><div class="lb" style="top:759px">启用自定义处理命令</div>
</body></html>
